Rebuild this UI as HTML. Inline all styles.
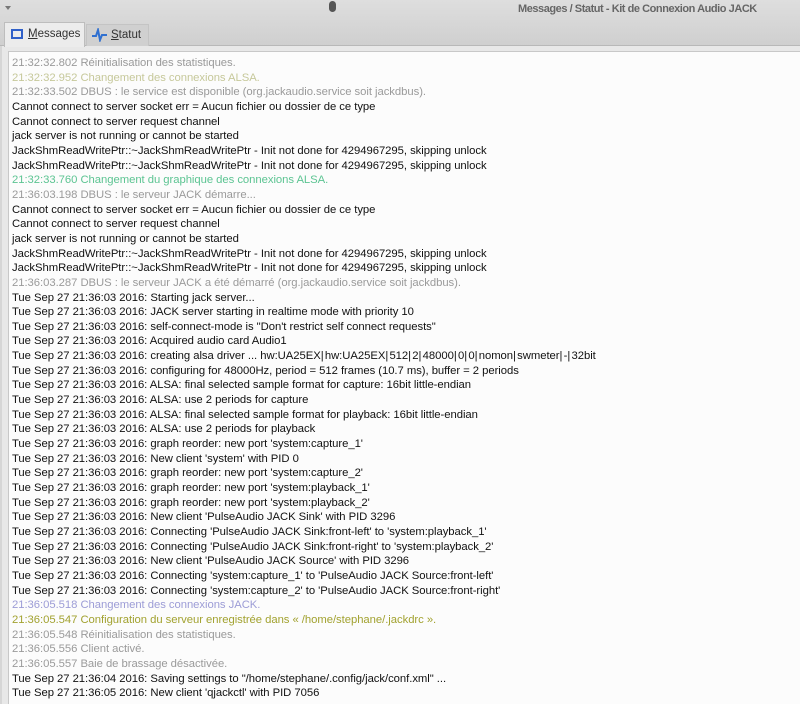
<!DOCTYPE html>
<html><head><meta charset="utf-8"><style>
html,body{margin:0;padding:0;width:800px;height:704px;overflow:hidden;background:#d6d6d6;font-family:"Liberation Sans","DejaVu Sans",sans-serif}
.top{position:absolute;left:0;top:0;width:800px;height:46px;background:linear-gradient(#dedede,#cfcfcf)}
.title{position:absolute;left:518px;top:3px;font-size:11px;font-weight:bold;color:#666;letter-spacing:-0.45px}
.arrow{position:absolute;left:5px;top:6px;width:0;height:0;border-left:3px solid transparent;border-right:3px solid transparent;border-top:4px solid #777}
.blob{position:absolute;left:329px;top:1px;width:7px;height:11px;border-radius:4px;background:#555}
.line{position:absolute;left:0;top:45px;width:800px;height:1px;background:#b8b8b8}
.tab{position:absolute;top:22px;height:24px;font-size:11.5px;color:#333;box-sizing:border-box}
.t1{left:4px;width:81px;background:#ececec;border:1px solid #bdbdbd;border-bottom:none;height:25px}
.t2{left:86px;width:63px;background:#d0d0d0;border:1px solid #c4c4c4;border-bottom:none;top:24px;height:22px}
.pane{position:absolute;left:2px;top:46px;width:798px;height:658px;background:#e8e8e8}
.text{position:absolute;left:8px;top:51px;width:792px;height:653px;background:#fcfcfc;border-left:1px solid #c8c8c8;border-top:1px solid #c8c8c8;box-sizing:border-box;padding:4px 0 0 3px;font-size:11.3px;line-height:14.66px;color:#111;white-space:pre;letter-spacing:-0.05px}
.g{color:#9a9a9a}.y{color:#c6c89a}.gr{color:#5cc492}.p{color:#9c9cd6}.o{color:#a2a230}
</style></head><body>
<div class="top"><div class="arrow"></div><div class="blob"></div><div class="title">Messages / Statut - Kit de Connexion Audio JACK</div></div>
<div class="line"></div>
<div class="pane"></div>
<div class="tab t1"><svg style="position:absolute;left:6px;top:6px" width="12" height="10"><rect x="1" y="1" width="10" height="8" fill="none" stroke="#3060c8" stroke-width="2"/></svg><span style="position:absolute;left:23px;top:5px"><u>M</u>essages</span></div>
<div class="tab t2"><svg style="position:absolute;left:5px;top:3px" width="16" height="14"><path d="M0 8 H4 L6 2 L8 12 L10 7 H15" fill="none" stroke="#3070d0" stroke-width="2"/></svg><span style="position:absolute;left:24px;top:4px"><u>S</u>tatut</span></div>
<div class="text"><span class="g">21:32:32.802 Réinitialisation des statistiques.</span>
<span class="y">21:32:32.952 Changement des connexions ALSA.</span>
<span class="g">21:32:33.502 DBUS : le service est disponible (org.jackaudio.service soit jackdbus).</span>
Cannot connect to server socket err = Aucun fichier ou dossier de ce type
Cannot connect to server request channel
jack server is not running or cannot be started
JackShmReadWritePtr::~JackShmReadWritePtr - Init not done for 4294967295, skipping unlock
JackShmReadWritePtr::~JackShmReadWritePtr - Init not done for 4294967295, skipping unlock
<span class="gr">21:32:33.760 Changement du graphique des connexions ALSA.</span>
<span class="g">21:36:03.198 DBUS : le serveur JACK démarre...</span>
Cannot connect to server socket err = Aucun fichier ou dossier de ce type
Cannot connect to server request channel
jack server is not running or cannot be started
JackShmReadWritePtr::~JackShmReadWritePtr - Init not done for 4294967295, skipping unlock
JackShmReadWritePtr::~JackShmReadWritePtr - Init not done for 4294967295, skipping unlock
<span class="g">21:36:03.287 DBUS : le serveur JACK a été démarré (org.jackaudio.service soit jackdbus).</span>
Tue Sep 27 21:36:03 2016: Starting jack server...
Tue Sep 27 21:36:03 2016: JACK server starting in realtime mode with priority 10
Tue Sep 27 21:36:03 2016: self-connect-mode is "Don't restrict self connect requests"
Tue Sep 27 21:36:03 2016: Acquired audio card Audio1
Tue Sep 27 21:36:03 2016: creating alsa driver ... hw:UA25EX<span style="letter-spacing:1.2px">|</span>hw:UA25EX<span style="letter-spacing:1.2px">|</span>512<span style="letter-spacing:1.2px">|</span>2<span style="letter-spacing:1.2px">|</span>48000<span style="letter-spacing:1.2px">|</span>0<span style="letter-spacing:1.2px">|</span>0<span style="letter-spacing:1.2px">|</span>nomon<span style="letter-spacing:1.2px">|</span>swmeter<span style="letter-spacing:1.2px">|</span>-<span style="letter-spacing:1.2px">|</span>32bit
Tue Sep 27 21:36:03 2016: configuring for 48000Hz, period = 512 frames (10.7 ms), buffer = 2 periods
Tue Sep 27 21:36:03 2016: ALSA: final selected sample format for capture: 16bit little-endian
Tue Sep 27 21:36:03 2016: ALSA: use 2 periods for capture
Tue Sep 27 21:36:03 2016: ALSA: final selected sample format for playback: 16bit little-endian
Tue Sep 27 21:36:03 2016: ALSA: use 2 periods for playback
Tue Sep 27 21:36:03 2016: graph reorder: new port 'system:capture_1'
Tue Sep 27 21:36:03 2016: New client 'system' with PID 0
Tue Sep 27 21:36:03 2016: graph reorder: new port 'system:capture_2'
Tue Sep 27 21:36:03 2016: graph reorder: new port 'system:playback_1'
Tue Sep 27 21:36:03 2016: graph reorder: new port 'system:playback_2'
Tue Sep 27 21:36:03 2016: New client 'PulseAudio JACK Sink' with PID 3296
Tue Sep 27 21:36:03 2016: Connecting 'PulseAudio JACK Sink:front-left' to 'system:playback_1'
Tue Sep 27 21:36:03 2016: Connecting 'PulseAudio JACK Sink:front-right' to 'system:playback_2'
Tue Sep 27 21:36:03 2016: New client 'PulseAudio JACK Source' with PID 3296
Tue Sep 27 21:36:03 2016: Connecting 'system:capture_1' to 'PulseAudio JACK Source:front-left'
Tue Sep 27 21:36:03 2016: Connecting 'system:capture_2' to 'PulseAudio JACK Source:front-right'
<span class="p">21:36:05.518 Changement des connexions JACK.</span>
<span class="o">21:36:05.547 Configuration du serveur enregistrée dans « /home/stephane/.jackdrc ».</span>
<span class="g">21:36:05.548 Réinitialisation des statistiques.</span>
<span class="g">21:36:05.556 Client activé.</span>
<span class="g">21:36:05.557 Baie de brassage désactivée.</span>
Tue Sep 27 21:36:04 2016: Saving settings to "/home/stephane/.config/jack/conf.xml" ...
Tue Sep 27 21:36:05 2016: New client 'qjackctl' with PID 7056</div>
</body></html>
